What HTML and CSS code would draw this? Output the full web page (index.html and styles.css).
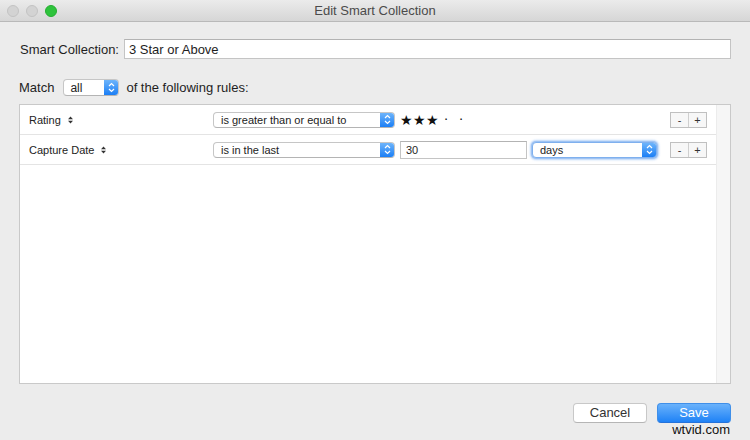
FILE: index.html
```html
<!DOCTYPE html>
<html>
<head>
<meta charset="utf-8">
<link rel="stylesheet" href="styles.css">
</head>
<body>
<div class="window">
  <div class="titlebar">
    <div class="lights">
      <span class="light idle"></span>
      <span class="light idle"></span>
      <span class="light green"></span>
    </div>
    <div class="title">Edit Smart Collection</div>
  </div>
  <div class="content">
    <div class="name-row">
      <span class="label">Smart Collection:</span>
      <div class="textfield name-field">3 Star or Above</div>
    </div>
    <div class="match-row">
      <span class="label">Match</span>
      <div class="popup popup-all">
        <span class="popup-text">all</span>
        <span class="cap"><svg width="7" height="11" viewBox="0 0 7 11"><path d="M1 4 L3.5 1.5 L6 4 M1 7 L3.5 9.5 L6 7" fill="none" stroke="#fff" stroke-width="1.2"/></svg></span>
      </div>
      <span class="label">of the following rules:</span>
    </div>
    <div class="rules">
      <div class="rules-list">
        <div class="rule">
          <div class="field-name">Rating <svg class="sort" width="5" height="8" viewBox="0 0 5 8"><path d="M0 3.2 L2.5 0.4 L5 3.2 Z M0 4.8 L2.5 7.6 L5 4.8 Z" fill="#333"/></svg></div>
          <div class="popup popup-op">
            <span class="popup-text">is greater than or equal to</span>
            <span class="cap"><svg width="7" height="11" viewBox="0 0 7 11"><path d="M1 4 L3.5 1.5 L6 4 M1 7 L3.5 9.5 L6 7" fill="none" stroke="#fff" stroke-width="1.2"/></svg></span>
          </div>
          <div class="stars"><span class="star">★</span><span class="star">★</span><span class="star">★</span><span class="dot">·</span><span class="dot">·</span></div>
          <div class="pm"><span class="pm-btn">-</span><span class="pm-btn">+</span></div>
        </div>
        <div class="rule">
          <div class="field-name">Capture Date <svg class="sort" width="5" height="8" viewBox="0 0 5 8"><path d="M0 3.2 L2.5 0.4 L5 3.2 Z M0 4.8 L2.5 7.6 L5 4.8 Z" fill="#333"/></svg></div>
          <div class="popup popup-op">
            <span class="popup-text">is in the last</span>
            <span class="cap"><svg width="7" height="11" viewBox="0 0 7 11"><path d="M1 4 L3.5 1.5 L6 4 M1 7 L3.5 9.5 L6 7" fill="none" stroke="#fff" stroke-width="1.2"/></svg></span>
          </div>
          <div class="textfield value-field">30</div>
          <div class="popup popup-unit focused">
            <span class="popup-text">days</span>
            <span class="cap"><svg width="7" height="11" viewBox="0 0 7 11"><path d="M1 4 L3.5 1.5 L6 4 M1 7 L3.5 9.5 L6 7" fill="none" stroke="#fff" stroke-width="1.2"/></svg></span>
          </div>
          <div class="pm"><span class="pm-btn">-</span><span class="pm-btn">+</span></div>
        </div>
      </div>
      <div class="scrolltrack"></div>
    </div>
    <div class="footer">
      <button class="btn">Cancel</button>
      <button class="btn primary">Save</button>
    </div>
  </div>
  <div class="watermark">wtvid.com</div>
</div>
</body>
</html>
```
FILE: styles.css
```css
* { box-sizing: border-box; }
html, body { margin: 0; padding: 0; }
body {
  width: 750px;
  height: 440px;
  overflow: hidden;
  font-family: "Liberation Sans", Arial, sans-serif;
  color: #1e1e1e;
  background: #ececec;
}
.window {
  position: relative;
  width: 750px;
  height: 440px;
  display: flex;
  flex-direction: column;
  background: #ececec;
}
.titlebar {
  position: relative;
  height: 22px;
  flex: none;
  background: linear-gradient(#ebebeb, #d6d6d6);
  border-bottom: 1px solid #b9b9b9;
  display: flex;
  align-items: center;
  justify-content: center;
}
.lights {
  position: absolute;
  left: 7px;
  top: 5px;
  display: flex;
  gap: 7px;
}
.light {
  width: 12px;
  height: 12px;
  border-radius: 50%;
}
.light.idle {
  background: #d3d3d3;
  border: 1px solid #c3c3c3;
}
.light.green {
  background: #2ec33c;
  border: 1px solid #25ae31;
}
.title {
  font-size: 13px;
  color: #4b4b4b;
}
.content {
  flex: 1;
  display: flex;
  flex-direction: column;
  padding: 17px 19px 0 19px;
}
.label {
  font-size: 13px;
  color: #1e1e1e;
}
.name-row {
  display: flex;
  align-items: center;
  height: 20px;
  padding-left: 1px;
  gap: 5px;
}
.textfield {
  background: #fff;
  border: 1px solid #c4c4c4;
  border-top-color: #b3b3b3;
  font-size: 13px;
  display: flex;
  align-items: center;
  padding-left: 4px;
}
.name-field {
  flex: 1;
  height: 20px;
}
.match-row {
  margin-top: 20px;
  display: flex;
  align-items: center;
  height: 17px;
}
.popup {
  display: flex;
  align-items: stretch;
  background: #fff;
  border: 1px solid #c6c6c6;
  border-bottom-color: #b4b4b4;
  border-radius: 4px;
  overflow: hidden;
  font-size: 11px;
  color: #222;
}
.popup-text {
  flex: 1;
  display: flex;
  align-items: center;
  padding-left: 6px;
  white-space: nowrap;
}
.cap {
  width: 14px;
  flex: none;
  background: linear-gradient(#6db4fb, #1c7ff5);
  display: flex;
  align-items: center;
  justify-content: center;
}
.popup-all {
  width: 56px;
  height: 17px;
  margin: 0 7px 0 9px;
}
.popup-all .popup-text { font-size: 12px; padding-left: 6px; }
.rules {
  margin-top: 8px;
  height: 280px;
  background: #fff;
  border: 1px solid #c9c9c9;
  display: flex;
}
.rules-list {
  flex: 1;
  display: flex;
  flex-direction: column;
}
.scrolltrack {
  width: 14px;
  flex: none;
  background: #f6f6f6;
  border-left: 1px solid #ececec;
}
.rule {
  height: 30px;
  border-bottom: 1px solid #e4e4e4;
  display: flex;
  align-items: center;
  padding-left: 9px;
  padding-right: 9px;
}
.field-name {
  width: 184px;
  flex: none;
  font-size: 11px;
  color: #222;
  display: flex;
  align-items: center;
}
.sort { margin-left: 7px; }
.popup-op {
  width: 182px;
  height: 16px;
  flex: none;
}
.popup-op .popup-text { padding-left: 7px; }
.stars {
  margin-left: 5px;
  display: flex;
  align-items: center;
  font-family: "DejaVu Sans", sans-serif;
  font-size: 14px;
  color: #111;
  height: 16px;
}
.star { width: 13px; line-height: 16px; }
.dot { width: 15px; padding-left: 5px; font-size: 13px; line-height: 16px; }
.value-field {
  margin-left: 5px;
  width: 127px;
  height: 18px;
  font-size: 11px;
  padding-left: 5px;
}
.popup-unit {
  margin-left: 5px;
  width: 125px;
  height: 16px;
  flex: none;
}
.popup-unit .popup-text { padding-left: 7px; }
.focused {
  border-color: #7fb0ee;
  box-shadow: 0 0 0 1px #9ec3f3, 0 0 2px 2px rgba(100, 160, 240, 0.45);
}
.pm {
  margin-left: auto;
  display: flex;
  border: 1px solid #c0c0c0;
  background: #f7f7f7;
  height: 16px;
}
.pm-btn {
  width: 17px;
  display: flex;
  align-items: center;
  justify-content: center;
  font-size: 11px;
  color: #333;
}
.pm-btn + .pm-btn { border-left: 1px solid #cfcfcf; width: 18px; }
.footer {
  margin-top: 19px;
  display: flex;
  justify-content: flex-end;
  gap: 10px;
}
.btn {
  width: 74px;
  height: 20px;
  font-family: "Liberation Sans", Arial, sans-serif;
  font-size: 13px;
  border-radius: 4px;
  border: 1px solid #c8c8c8;
  border-bottom-color: #b5b5b5;
  background: #fff;
  color: #333;
  padding: 0;
  line-height: 18px;
}
.btn.primary {
  background: linear-gradient(#6ab2fb, #1f82f6);
  border-color: #3f8fe9;
  border-bottom-color: #2572d9;
  color: #fff;
}
.watermark {
  position: absolute;
  right: 20px;
  bottom: 3px;
  font-size: 13px;
  color: #111;
  font-family: "Liberation Sans", Arial, sans-serif;
}
```
